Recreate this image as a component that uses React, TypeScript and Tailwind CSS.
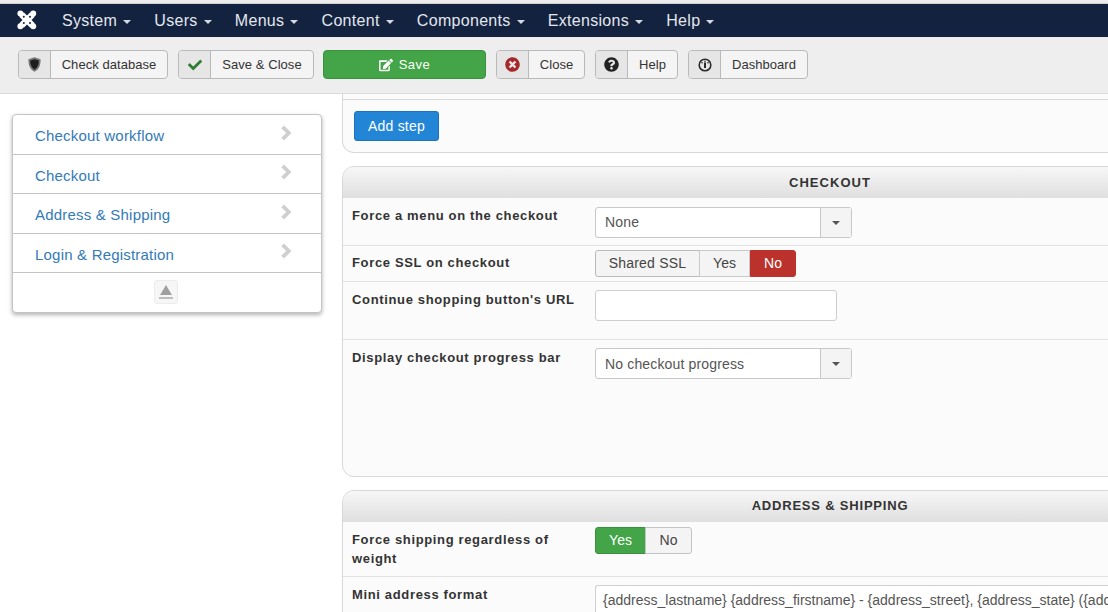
import React from "react";
import { FaCheck, FaTimesCircle, FaQuestionCircle, FaEdit } from "react-icons/fa";

const Joomla = () => (
  <svg width="20" height="20" viewBox="0 0 20 20" fill="none">
    <g stroke="#fff" strokeWidth="6.4">
      <path d="M4.5 4.5 L15.5 15.5" />
      <path d="M15.5 4.5 L4.5 15.5" />
    </g>
    <g fill="#fff">
      <circle cx="3.4" cy="3.4" r="3" />
      <circle cx="16.2" cy="3.4" r="3" />
      <circle cx="3.4" cy="16.2" r="3" />
      <circle cx="16.2" cy="16.2" r="3" />
    </g>
    <g fill="#13223f">
      <circle cx="6.8" cy="6.8" r="1" />
      <circle cx="13" cy="6.8" r="1" />
      <circle cx="6.8" cy="13" r="1" />
      <circle cx="13" cy="13" r="1" />
    </g>
  </svg>
);

const Shield = () => (
  <svg width="13" height="15" viewBox="0 0 13 15">
    <path d="M6.5 .3 L12.6 2.2 C12.8 8 11 12.4 6.5 14.8 C2 12.4 .2 8 .4 2.2 Z" fill="#777" />
    <path d="M6.5 2.2 L10.8 3.6 C10.8 8 9.5 11 6.5 12.8 C3.5 11 2.2 8 2.2 3.6 Z" fill="#1d1d1d" />
  </svg>
);

const Gauge = () => (
  <svg width="14" height="14" viewBox="0 0 14 14" fill="none">
    <circle cx="7" cy="7" r="5.8" stroke="#2b2b2b" strokeWidth="1.6" />
    <path d="M7 4.4 V10" stroke="#2b2b2b" strokeWidth="2" />
    <circle cx="7" cy="3.2" r=".8" fill="#2b2b2b" />
    <circle cx="4" cy="4.8" r=".8" fill="#2b2b2b" />
    <circle cx="10" cy="4.8" r=".8" fill="#2b2b2b" />
  </svg>
);

const Chevron = () => (
  <svg width="12" height="16" viewBox="0 0 12 16" fill="none" className="-mt-[7px]">
    <path d="M2.6 1.8 L8.8 8 L2.6 14.2" stroke="#cfcfcf" strokeWidth="3.8" />
  </svg>
);

const NavItem = ({ label }: { label: string }) => (
  <div className="flex items-center gap-[6px]">
    <span className="tracking-[0.3px]">{label}</span>
    <span className="w-0 h-0 mt-[2px] border-x-[4px] border-x-transparent border-t-[4px] border-t-[#d5d9e0]" />
  </div>
);

const ToolButton = ({ icon, label, width }: { icon: React.ReactNode; label: string; width: string }) => (
  <div className={`${width} flex h-[29px] rounded-[4px] border border-[#b9b9b9] bg-[#f4f4f4] text-[13px] text-[#333] tracking-[0.05px]`}>
    <div className="w-[32px] shrink-0 flex items-center justify-center bg-[#e6e6e6] border-r border-[#b9b9b9] rounded-l-[3px]">{icon}</div>
    <div className="flex-1 flex items-center justify-center">{label}</div>
  </div>
);

const MenuRow = ({ label }: { label: string }) => (
  <div className="h-[39.5px] flex items-center justify-between pl-[22px] pr-[29px] pt-[4px] border-b border-[#c4c4c4] text-[15px] text-[#337ab7]">
    <span className="tracking-[0.2px]">{label}</span>
    <Chevron />
  </div>
);

const Label = ({ children }: { children: React.ReactNode }) => (
  <div className="w-[252px] shrink-0 pl-[9px] pr-[10px] text-[13px] leading-[19px] font-bold text-[#333] tracking-[0.65px]">{children}</div>
);

const Select = ({ value, width, textClass = "" }: { value: string; width: string; textClass?: string }) => (
  <div className={`${width} h-[31px] flex rounded-[3px] border border-[#c8c8c8] bg-white text-[14px] text-[#555]`}>
    <div className={`flex-1 flex items-center pl-[9px] tracking-[0.15px] ${textClass}`}>{value}</div>
    <div className="w-[31px] flex items-center justify-center bg-[#f4f4f4] border-l border-[#c8c8c8]">
      <span className="w-0 h-0 border-x-[4px] border-x-transparent border-t-[4px] border-t-[#555]" />
    </div>
  </div>
);

const Seg = ({ children, className }: { children: React.ReactNode; className: string }) => (
  <div className={`h-[27px] flex items-center justify-center text-[14px] border ${className}`}>{children}</div>
);

const PanelHeader = ({ title, className = "" }: { title: string; className?: string }) => (
  <div className={`h-[31px] flex items-center justify-center rounded-t-[12px] bg-gradient-to-b from-[#f7f7f7] to-[#dfdfdf] text-[13px] font-bold text-[#333] ${className}`}>
    {title}
  </div>
);

export default function App() {
  return (
    <div className="w-[1108px] h-[612px] overflow-hidden flex flex-col bg-white font-['Liberation_Sans',Arial,sans-serif]">
      <div className="h-[4px] shrink-0 bg-[#ececec] border-b border-[#cfcfcf]" />
      <div className="h-[33px] shrink-0 flex items-center bg-[#13223f] text-[#e3e7ee] text-[16px]">
        <div className="ml-[17px] mr-[25px] -mt-[1px]"><Joomla /></div>
        <div className="flex gap-[23.2px]">
          {["System", "Users", "Menus", "Content", "Components", "Extensions", "Help"].map((n) => (
            <NavItem key={n} label={n} />
          ))}
        </div>
      </div>
      <div className="h-[57px] shrink-0 flex items-start pt-[13px] pl-[18px] gap-[10px] bg-[#eeeeee] border-b border-[#dcdcdc]">
        <ToolButton width="w-[150px]" icon={<Shield />} label="Check database" />
        <ToolButton width="w-[136px]" icon={<FaCheck className="text-[#2f7d32] text-[14px]" />} label="Save & Close" />
        <div className="w-[163px] -ml-px h-[29px] flex items-center justify-center gap-[6px] rounded-[4px] bg-[#43a547] border border-[#3b8f3f] text-white text-[13px] font-medium tracking-[0.5px]">
          <FaEdit className="text-[14px]" />
          <span>Save</span>
        </div>
        <ToolButton width="w-[89px]" icon={<FaTimesCircle className="text-[#a5282c] text-[15px]" />} label="Close" />
        <ToolButton width="w-[83px]" icon={<FaQuestionCircle className="text-[#222] text-[15px]" />} label="Help" />
        <ToolButton width="w-[120px]" icon={<Gauge />} label="Dashboard" />
      </div>

      <div className="flex-1 min-h-0 flex items-start">
        <div className="w-[310px] shrink-0 ml-[12px] mt-[20px] rounded-[4px] border border-[#c4c4c4] shadow-[0_2px_4px_rgba(0,0,0,0.3)] bg-white">
          <MenuRow label="Checkout workflow" />
          <MenuRow label="Checkout" />
          <MenuRow label="Address & Shipping" />
          <MenuRow label="Login & Registration" />
          <div className="h-[39px] flex justify-center pt-[7px] pr-[2px]">
            <div className="w-[24px] h-[24px] flex flex-col items-center justify-center rounded-[3px] border border-[#ececec] bg-[#f6f6f6]">
              <span className="w-0 h-0 border-x-[6px] border-x-transparent border-b-[10px] border-b-[#a0a0a0]" />
              <span className="w-[14px] h-[2px] mt-[2px] bg-[#bdbdbd]" />
            </div>
          </div>
        </div>

        <div className="ml-[20px] w-[976px] shrink-0 flex flex-col">
          <div className="h-[59px] flex flex-col border-x border-b border-[#d8d8d8] rounded-b-[12px] bg-[#fbfbfb]">
            <div className="h-[6px] shrink-0 border-b border-[#d8d8d8]" />
            <div className="flex-1 flex items-center pl-[11px]">
              <div className="w-[85px] h-[30px] flex items-center justify-center rounded-[3px] bg-[#2385d6] border border-[#1e74bb] text-white text-[14px] tracking-[0.2px]">Add step</div>
            </div>
          </div>

          <div className="mt-[13px] h-[311px] rounded-[12px] border border-[#d8d8d8] bg-[#fbfbfb] flex flex-col">
            <PanelHeader title="CHECKOUT" className="tracking-[1.05px]" />
            <div className="h-[48px] flex pt-[8px] border-b border-[#e2e2e2]">
              <Label>Force a menu on the checkout</Label>
              <div className="pt-[1px]"><Select value="None" width="w-[257px]" textClass="pb-[1px]" /></div>
            </div>
            <div className="h-[36px] flex items-start pt-[4px] border-b border-[#e2e2e2]">
              <Label>
                <span className="block pt-[3px]">Force SSL on checkout</span>
              </Label>
              <div className="flex">
                <Seg className="w-[105px] rounded-l-[3px] bg-[#f4f4f4] border-[#b9b9b9] text-[#444] tracking-[0.2px]">Shared SSL</Seg>
                <Seg className="w-[51px] -ml-px bg-[#f4f4f4] border-[#c9c9c9] text-[#444]">Yes</Seg>
                <Seg className="w-[46px] rounded-r-[3px] bg-[#bb312c] border-[#bb312c] text-white">No</Seg>
              </div>
            </div>
            <div className="h-[58px] flex pt-[8px] border-b border-[#e2e2e2]">
              <Label>Continue shopping button's URL</Label>
              <div className="w-[242px] h-[31px] rounded-[3px] border border-[#cfcfcf] bg-white" />
            </div>
            <div className="flex-1 flex pt-[8px]">
              <Label>Display checkout progress bar</Label>
              <Select value="No checkout progress" width="w-[257px]" textClass="pt-[1px]" />
            </div>
          </div>

          <div className="mt-[13px] rounded-t-[12px] border border-[#d8d8d8] bg-[#fbfbfb] flex flex-col h-[200px]">
            <PanelHeader title="ADDRESS & SHIPPING" className="pb-[2px] tracking-[0.8px]" />
            <div className="h-[55px] flex pt-[5px] border-b border-[#e2e2e2]">
              <Label><span className="block pt-[3px]">Force shipping regardless of weight</span></Label>
              <div className="flex">
                <Seg className="w-[51px] rounded-l-[3px] bg-[#43a547] border-[#3b8f3f] text-white">Yes</Seg>
                <Seg className="w-[47px] -ml-px rounded-r-[3px] bg-[#f4f4f4] border-[#c4c4c4] text-[#444]">No</Seg>
              </div>
            </div>
            <div className="flex pt-[8px]">
              <Label>Mini address format</Label>
              <div className="w-[514px] h-[60px] overflow-hidden rounded-l-[3px] border-y border-l border-[#cfcfcf] bg-white pl-[7px] pt-[4px] text-[14px] text-[#555] whitespace-nowrap">
                {"{address_lastname} {address_firstname} - {address_street}, {address_state} ({address_country})"}
              </div>
            </div>
          </div>
        </div>
      </div>
    </div>
  );
}
